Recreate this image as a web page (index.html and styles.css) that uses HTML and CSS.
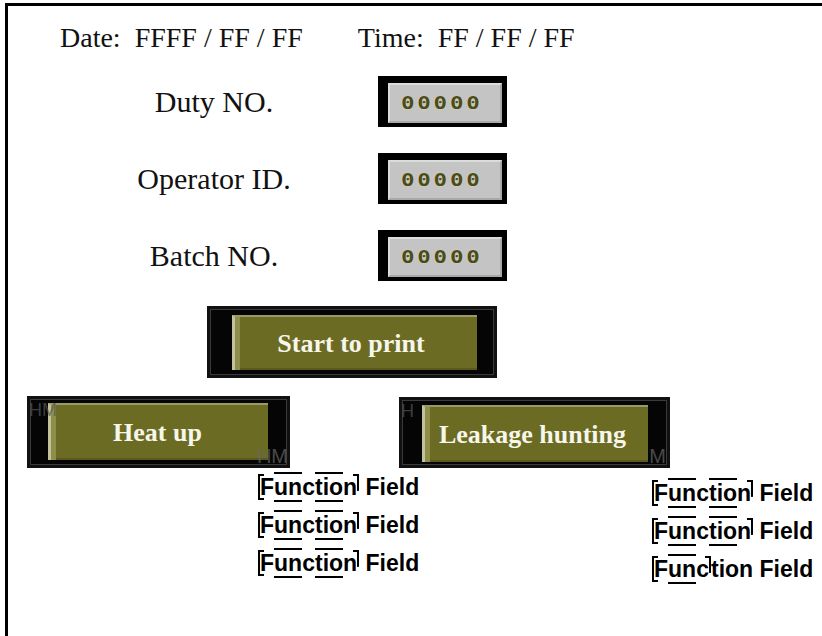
FILE: index.html
```html
<!DOCTYPE html>
<html>
<head>
<meta charset="utf-8">
<link rel="stylesheet" href="styles.css">
</head>
<body>
<div class="panel">
  <div class="datetime">
    <span class="dt">Date:&nbsp; FFFF / FF / FF</span>
    <span class="dt">Time:&nbsp; FF / FF / FF</span>
  </div>

  <div class="form">
    <div class="lbl">Duty NO.</div>
    <div class="lcd"><div class="lcd-in"><span class="digits">00000</span></div></div>

    <div class="lbl">Operator ID.</div>
    <div class="lcd"><div class="lcd-in"><span class="digits">00000</span></div></div>

    <div class="lbl">Batch NO.</div>
    <div class="lcd"><div class="lcd-in"><span class="digits">00000</span></div></div>
  </div>

  <div class="start">
    <div class="btn btn-start"><div class="btn-in">Start to print</div></div>
  </div>

  <div class="btnrow">
    <div class="btn btn-heat"><span class="wm wm-bl">HM</span><div class="btn-in">Heat up</div><span class="wm wm-br">HM</span></div>
    <div class="btn btn-leak"><span class="wm wm-bl">H</span><div class="btn-in">Leakage hunting</div><span class="wm wm-br">M</span></div>
  </div>

  <div class="fields">
    <div class="col col-l">
      <div class="ff"><span class="fn"><span class="bl">F</span><span class="seg">un</span>c<span class="seg">tio</span><span class="br">n</span></span> Field</div>
      <div class="ff"><span class="fn"><span class="bl">F</span><span class="seg">un</span>c<span class="seg">tio</span><span class="br">n</span></span> Field</div>
      <div class="ff"><span class="fn"><span class="bl">F</span><span class="seg">un</span>c<span class="seg">tio</span><span class="br">n</span></span> Field</div>
    </div>
    <div class="col col-r">
      <div class="ff"><span class="fn"><span class="bl">F</span><span class="seg">un</span>c<span class="seg">tio</span><span class="br">n</span></span> Field</div>
      <div class="ff"><span class="fn"><span class="bl">F</span><span class="seg">un</span>c<span class="seg">tio</span><span class="br">n</span></span> Field</div>
      <div class="ff"><span class="fn"><span class="bl">F</span><span class="seg">un</span><span class="br">c</span></span>tion Field</div>
    </div>
  </div>
</div>
</body>
</html>
```
FILE: styles.css
```css
html, body {
  margin: 0;
  padding: 0;
  background: #fff;
}
body {
  width: 822px;
  height: 636px;
  overflow: hidden;
}
.panel {
  margin: 3px 0 0 5px;
  height: 633px;
  box-sizing: border-box;
  border-top: 3px solid #000;
  border-left: 3px solid #000;
  font-family: "Liberation Serif", "Times New Roman", serif;
  color: #111;
}
.datetime {
  display: flex;
  gap: 55px;
  margin: 16px 0 0 52px;
  font-size: 28px;
  line-height: 32px;
  white-space: nowrap;
}
.form {
  display: grid;
  grid-template-columns: 328px 129px;
  row-gap: 26px;
  align-items: center;
  margin: 22px 0 0 42px;
}
.lbl {
  text-align: center;
  font-size: 30px;
  line-height: 34px;
}
.lcd {
  width: 129px;
  height: 51px;
  box-sizing: border-box;
  background: #000;
  padding: 7px 5px 4px 10px;
}
.lcd-in {
  height: 100%;
  box-sizing: border-box;
  background: #c4c4c4;
  border: 2px solid #dcdcdc;
  border-right-color: #a8a8a8;
  border-bottom-color: #a8a8a8;
  padding: 7px 0 0 11px;
  overflow: hidden;
}
.digits {
  display: inline-block;
  font-family: "DejaVu Sans Mono", "Liberation Mono", monospace;
  font-weight: bold;
  font-size: 18px;
  line-height: 22px;
  letter-spacing: 2.2px;
  color: #4c4c16;
  transform: scaleX(1.25);
  transform-origin: left center;
  font-feature-settings: "zero" 1;
  text-shadow: 0 0 1px #e8e8d0;
}
.wm {
  position: absolute;
  font-family: "Liberation Sans", Arial, sans-serif;
  opacity: 0.7;
  line-height: 20px;
}
.start {
  margin: 25px 0 0 199px;
}
.btn {
  position: relative;
  box-sizing: border-box;
  background: #050505;
  box-shadow: inset 0 0 0 3px #111, inset 0 0 0 4px #3a3a3a;
}
.btn-in {
  display: flex;
  align-items: center;
  justify-content: center;
  height: 100%;
  box-sizing: border-box;
  background: #6b6b24;
  border-left: 3px solid #c2c29a;
  border-top: 2px solid #9a9a66;
  box-shadow: inset 5px 0 0 #8e8e4a, inset 0 -2px 0 #5a5a1c;
  color: #f6f6ea;
  font-weight: bold;
  font-size: 26px;
  white-space: nowrap;
}
.btn-start {
  width: 290px;
  height: 72px;
  padding: 9px 20px 8px 25px;
}
.btn-start .btn-in {
  padding-right: 10px;
}
.btnrow {
  display: flex;
  align-items: flex-start;
  gap: 109px;
  margin: 18px 0 0 19px;
}
.btn-heat {
  width: 263px;
  height: 72px;
  padding: 7px 22px 8px 21px;
}
.btn-heat .btn-in {
  padding-right: 4px;
}
.btn-leak {
  width: 271px;
  height: 71px;
  margin-top: 1px;
  padding: 8px 22px 6px 23px;
}
.btn-leak .btn-in {
  padding-right: 8px;
}
.wm-bl { left: 2px; top: 4px; font-size: 18px; color: #555; }
.wm-br { right: 2px; bottom: 2px; font-size: 20px; color: #666; }
.btn-leak .wm-br { right: 4px; }
.fields {
  display: flex;
  margin-left: 250px;
}
.col-l {
  width: 394px;
}
.col-r {
  margin-top: 6px;
}
.ff {
  font-family: "Liberation Sans", Arial, sans-serif;
  font-weight: bold;
  font-size: 23px;
  line-height: 38px;
  color: #000;
  white-space: nowrap;
}
.seg {
  border-top: 2px solid #000;
  border-bottom: 2px solid #000;
}
.bl {
  padding-left: 2px;
  background:
    linear-gradient(#000, #000) left top / 2px 100% no-repeat,
    linear-gradient(#000, #000) left top / 6px 2px no-repeat,
    linear-gradient(#000, #000) left bottom / 6px 2px no-repeat;
}
.br {
  padding-right: 2px;
  background:
    linear-gradient(#000, #000) right top / 2px 65% no-repeat,
    linear-gradient(#000, #000) right top / 6px 2px no-repeat;
}
```
